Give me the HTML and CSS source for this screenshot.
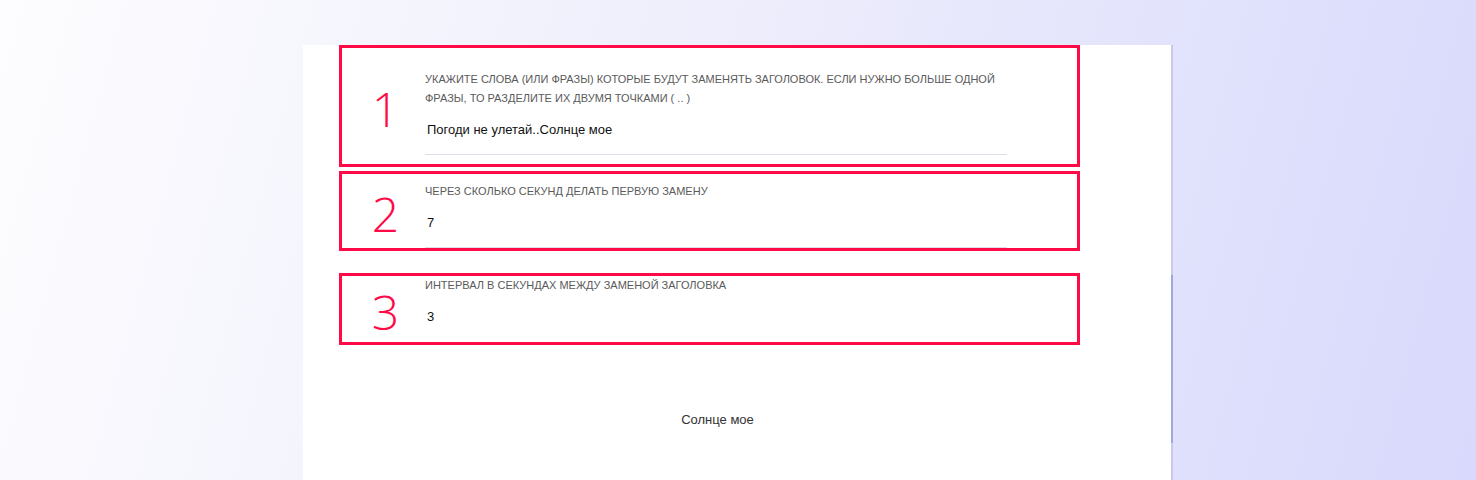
FILE: index.html
```html
<!DOCTYPE html>
<html lang="ru">
<head>
    <meta charset="UTF-8">
    <title>Замена заголовка</title>
    <link rel="stylesheet" href="styles.css">
</head>
<body>
    <div class="panel">
        <div class="field field-first">
            <div class="num">1</div>
            <div class="body">
                <div class="label">Укажите слова (или фразы) которые будут заменять заголовок. Если нужно больше одной фразы, то разделите их двумя точками ( .. )</div>
                <div class="input">Погоди не улетай..Солнце мое</div>
            </div>
        </div>
        <div class="field field-second">
            <div class="num">2</div>
            <div class="body">
                <div class="label">Через сколько секунд делать первую замену</div>
                <div class="input">7</div>
            </div>
        </div>
        <div class="field field-third">
            <div class="num">3</div>
            <div class="body">
                <div class="label">Интервал в секундах между заменой заголовка</div>
                <div class="input">3</div>
            </div>
        </div>
        <div class="preview">Солнце мое</div>
        <div class="scroll-thumb"></div>
    </div>
</body>
</html>
```
FILE: styles.css
```css
body {
    margin: 0;
    height: 480px;
    overflow: hidden;
    font-family: "Liberation Sans", Arial, sans-serif;
    background: linear-gradient(105deg, #fdfdff 0%, #eeeefc 45%, #d8d9fc 100%);
}
.panel {
    position: relative;
    margin: 45px 0 0 303px;
    width: 832px;
    height: 435px;
    padding-left: 36px;
    background-color: #fff;
    border-right: 2px solid #c8cae8;
}
.field {
    display: flex;
    width: 735px;
    border: 3px solid #ff0a47;
}
.field-second {
    margin-top: 4px;
}
.field-third {
    margin-top: 22px;
}
.num {
    width: 79px;
    display: flex;
    align-items: center;
    justify-content: center;
    padding: 6px 0 0 4px;
    color: #ff0a47;
    font-family: "Open Sans", sans-serif;
    font-weight: 300;
    font-size: 48px;
    line-height: 1;
}
.body {
    width: 582px;
}
.field-first .body {
    padding: 22px 0 9px;
}
.field-second .body {
    padding-top: 8px;
}
.field-third .body {
    padding-top: 0;
}
.label {
    color: #5a5a5a;
    font-size: 11px;
    line-height: 19px;
    text-transform: uppercase;
    font-weight: 300;
}
.input {
    margin-top: 7px;
    padding: 6px 2px 15px;
    font-size: 13px;
    line-height: 18px;
    color: #111;
    border-bottom: 1px solid #dcdfea;
}
.field-third .input {
    border-bottom-color: transparent;
}
.preview {
    width: 741px;
    margin-top: 67px;
    padding-left: 8px;
    text-align: center;
    font-size: 13px;
    color: #333;
}
.scroll-thumb {
    position: absolute;
    right: -2px;
    top: 230px;
    width: 2px;
    height: 168px;
    background-color: #9eaade;
}
```
